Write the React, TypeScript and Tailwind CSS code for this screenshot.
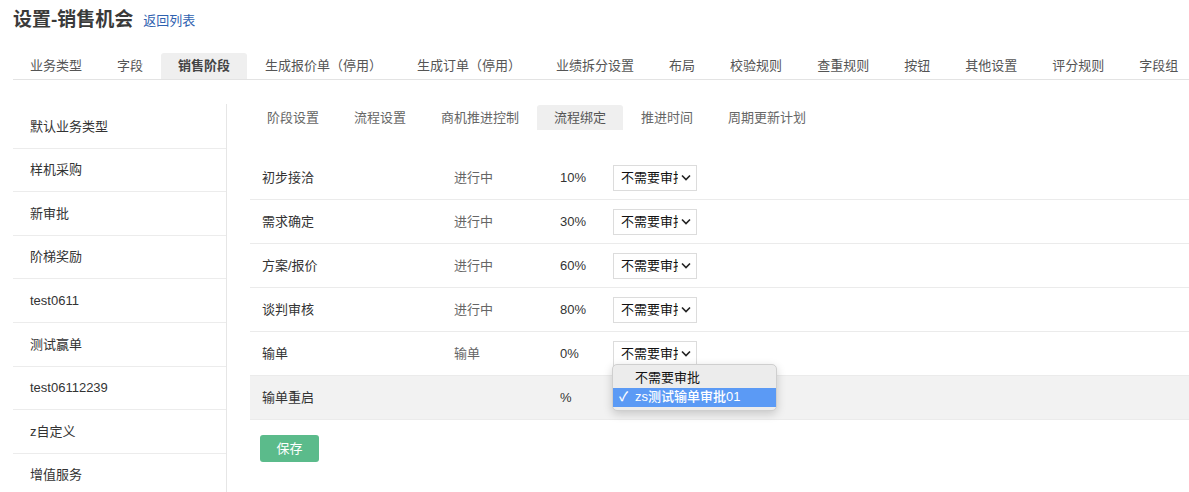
import React from "react";

const topTabs = [
  "业务类型",
  "字段",
  "销售阶段",
  "生成报价单（停用）",
  "生成订单（停用）",
  "业绩拆分设置",
  "布局",
  "校验规则",
  "查重规则",
  "按钮",
  "其他设置",
  "评分规则",
  "字段组",
];

const subTabs = ["阶段设置", "流程设置", "商机推进控制", "流程绑定", "推进时间", "周期更新计划"];

const bizTypes = [
  "默认业务类型",
  "样机采购",
  "新审批",
  "阶梯奖励",
  "test0611",
  "测试赢单",
  "test06112239",
  "z自定义",
  "增值服务",
];

type Stage = { name: string; status: string; pct: string; select: boolean; open?: boolean; gray?: boolean };

const stages: Stage[] = [
  { name: "初步接洽", status: "进行中", pct: "10%", select: true },
  { name: "需求确定", status: "进行中", pct: "30%", select: true },
  { name: "方案/报价", status: "进行中", pct: "60%", select: true },
  { name: "谈判审核", status: "进行中", pct: "80%", select: true },
  { name: "输单", status: "输单", pct: "0%", select: true, open: true },
  { name: "输单重启", status: "", pct: "%", select: false, gray: true },
];

function Chevron() {
  return (
    <svg width="10" height="7" viewBox="0 0 10 7" className="shrink-0">
      <polyline points="1,1.5 5,5.5 9,1.5" fill="none" stroke="#222" strokeWidth="1.6" />
    </svg>
  );
}

// the select's label is clipped on purpose, as in the native control
function ApprovalSelect({ open }: { open?: boolean }) {
  return (
    <div className="relative">
      <div className="flex items-center w-[84px] h-[26px] border border-[#dcdcdc] bg-white pl-[7px] pr-[5px] gap-[3px]">
        <span className="w-[58px] overflow-hidden whitespace-nowrap text-[13px] text-[#111]">不需要审批</span>
        <Chevron />
      </div>
      {open && (
        <div className="absolute left-[-1px] top-[23px] z-10 w-[165px] rounded-[5px] border border-[#cfcfcf] bg-[#ececec] py-[3px] shadow-[0_3px_10px_rgba(0,0,0,0.18)]">
          <div className="flex items-center h-[20px] pl-[22px] text-[13px] text-[#111]">不需要审批</div>
          <div className="flex items-center h-[19px] bg-[#5b9af5] text-[13px] font-medium text-white">
            <span className="w-[22px] pl-[6px]">✓</span>
            <span>zs测试输单审批01</span>
          </div>
        </div>
      )}
    </div>
  );
}

export default function App() {
  return (
    <div
      className="w-full h-[492px] overflow-hidden bg-white text-[#333]"
      style={{ fontFamily: '"Liberation Sans", "Noto Sans CJK SC", sans-serif' }}
    >
      {/* header */}
      <div className="flex items-center h-[40px] pl-[13px] gap-[10px]">
        <span className="text-[19px] font-bold text-[#3a3a3a]">设置-销售机会</span>
        <span className="text-[13px] text-[#2f62b0] mt-[2px]">返回列表</span>
      </div>

      {/* main tabs */}
      <div className="ml-[13px] mt-[13px] flex gap-px border-b border-[#e3e3e3] whitespace-nowrap">
        {topTabs.map((t) => (
          <div
            key={t}
            className={
              t === "销售阶段"
                ? "h-[26px] px-[17px] flex items-center rounded-t-[3px] bg-[#efefef] text-[13px] font-bold text-[#444]"
                : "h-[26px] px-[17px] flex items-center text-[13px] text-[#555]"
            }
          >
            {t}
          </div>
        ))}
      </div>

      <div className="flex pt-[24px] h-full">
        {/* business types */}
        <div className="ml-[13px] w-[214px] shrink-0 border-r border-[#e6e6e6] h-full">
          <div className="mt-px">
            {bizTypes.map((b) => (
              <div key={b} className="h-[43.6px] flex items-center pl-[17px] border-b border-[#ececec] text-[13px] text-[#333]">
                {b}
              </div>
            ))}
          </div>
        </div>

        {/* content */}
        <div className="flex-1 pl-[23px] pt-px">
          <div className="flex gap-px whitespace-nowrap">
            {subTabs.map((t) => (
              <div
                key={t}
                className={
                  t === "流程绑定"
                    ? "h-[25px] px-[17px] flex items-center rounded-t-[3px] bg-[#efefef] text-[13px] text-[#555]"
                    : "h-[25px] px-[17px] flex items-center text-[13px] text-[#666]"
                }
              >
                {t}
              </div>
            ))}
          </div>

          <div className="mt-[26px]">
            {stages.map((s) => (
              <div
                key={s.name}
                className={
                  s.gray
                    ? "flex items-center h-[44px] border-b border-[#ebebeb] bg-[#f2f2f2] text-[13px]"
                    : "flex items-center h-[44px] border-b border-[#ebebeb] text-[13px]"
                }
              >
                <div className="w-[204px] pl-[12px] text-[#333]">{s.name}</div>
                <div className="w-[106px] text-[#666]">{s.status}</div>
                <div className="w-[53px] text-[#333]">{s.pct}</div>
                {s.select && <ApprovalSelect open={s.open} />}
              </div>
            ))}
          </div>

          <button className="mt-[15px] ml-[10px] w-[59px] h-[27px] rounded-[3px] bg-[#5bbb8b] text-[13px] text-white">
            保存
          </button>
        </div>
      </div>
    </div>
  );
}
